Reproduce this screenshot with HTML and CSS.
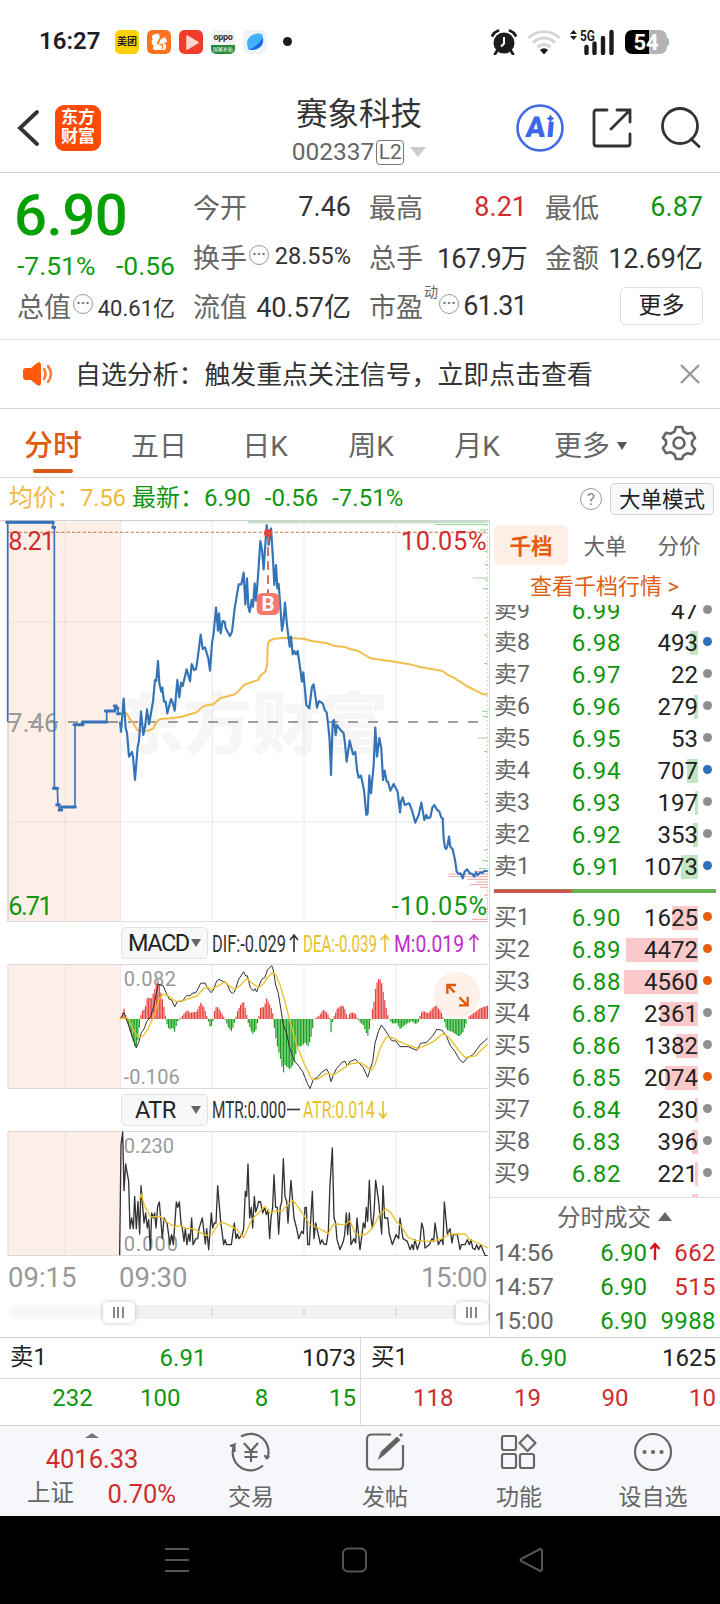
FILE: index.html
```html
<!DOCTYPE html>
<html lang="zh-CN">
<head>
  <meta charset="UTF-8">
  <meta name="viewport" content="width=device-width, initial-scale=1.0">
  <title>赛象科技 002337</title>
  <link rel="stylesheet" href="styles.css">
</head>
<body>
  <!-- Status bar -->
  <div class="status">
    <span class="clock">16:27</span>
    <div class="apps">
      <span class="app app-mt">美团</span>
      <svg class="app" viewBox="0 0 24 24"><rect width="24" height="24" rx="5" fill="#fa741f"/><path d="M8 4c4-2 6 2 4 5l-2 4c0 2 1 2 2 1 1-4 2-6 5-6l.5-1.500L19 9c1 1 1.500 3-.5 3.500L17 13c3 2 3 6 0 7H9c-3 0-4-2-2-4C4 14 4 11 6 9 4 7 5 5 8 4z" fill="#fff"/><path d="M12.500 15c3-2 4 1 2.500 4" fill="none" stroke="#fb7a1e" stroke-width="1.300"/></svg>
      <svg class="app" viewBox="0 0 24 24"><rect width="24" height="24" rx="5" fill="#f03c28"/><path d="M8 6l11 6.500L8 19z" fill="#fcd5cf" stroke="#fcd5cf" stroke-width="1.500" stroke-linejoin="round"/></svg>
      <span class="app app-oppo"><b>oppo</b><i>国家补贴</i></span>
      <svg class="app" viewBox="0 0 24 24"><rect width="24" height="24" rx="5" fill="#f1f4f7"/><path d="M19 4C13 2 4 6 4 13l1 6c8 3 17-2 15-11z" fill="#3fb0fa"/><path d="M20 8c1 7-5 13-15 12C12 18 17 13 20 8z" fill="#1b62e8"/></svg>
    </div>
    <span class="status-dot"></span>
    <div class="status-right">
      <svg class="alarm" width="26" height="26" viewBox="0 0 26 26"><circle cx="13" cy="14" r="10.500" fill="#1c1c1e"/><path d="M1.500 6.500A10 10 0 0 1 7 1.800M24.500 6.500A10 10 0 0 0 19 1.800M6 22l-2 3M20 22l2 3" stroke="#1c1c1e" stroke-width="2.800" fill="none" stroke-linecap="round"/><path d="M13 8v6.500l-3 3" stroke="#fff" stroke-width="2" fill="none"/></svg>
      <svg class="wifi" width="34" height="26" viewBox="0 0 34 26"><g fill="none" stroke="#d4d4d6" stroke-width="2.800"><path d="M1.500 9a22 22 0 0 1 31 0"/><path d="M6 13.800a15.500 15.500 0 0 1 22 0"/><path d="M10.500 18.500a9 9 0 0 1 13 0"/></g><path d="M17 25.500l-4-4.500a5.500 5.500 0 0 1 8 0z" fill="#1c1c1e"/></svg>
      <svg class="signal" width="46" height="26" viewBox="0 0 46 26"><path d="M0 5l3.500-4L7 5zM0 7l3.500 4L7 7z" fill="#1c1c1e"/><text x="10" y="11.500" textLength="15" lengthAdjust="spacingAndGlyphs">5G</text><path d="M16.500 18v6M24.500 14.500v9.500M33 9v15M41.500 3v21" stroke="#1c1c1e" stroke-width="4.400" stroke-linecap="round"/></svg>
      <span class="battery">54</span><i class="nub"></i>
    </div>
  </div>

  <!-- Header -->
  <div class="header">
    <svg class="back" width="22" height="38" viewBox="0 0 22 38"><path d="M20 3L3 19l17 16" fill="none" stroke="#333" stroke-width="3.800" stroke-linecap="round"/></svg>
    <span class="logo">东方<br>财富</span>
    <div class="title">
      <h1>赛象科技</h1>
      <div class="code">002337<span class="l2">L2</span><i class="tri"></i></div>
    </div>
    <div class="tools">
      <svg class="ai" width="48" height="48" viewBox="0 0 48 48"><circle cx="24" cy="24" r="22.500" fill="none" stroke="#4169e6" stroke-width="2.600"/><text x="9" y="33" transform="skewX(-5) translate(3 0)">Aı</text><path d="M34.500 10.500q.8 3 4 4-3.200 1-4 4-.8-3-4-4 3.200-1 4-4z" fill="#3d66ea"/></svg>
      <svg width="42" height="42" viewBox="0 0 42 42"><g fill="none" stroke="#333" stroke-width="2.800" stroke-linecap="round"><path d="M16 3H5.500Q3 3 3 5.500v31Q3 39 5.500 39h31Q39 39 39 36.500V27"/><path d="M26 3h13v12M38 4L20 22"/></g></svg>
      <svg width="42" height="42" viewBox="0 0 42 42"><g fill="none" stroke="#333" stroke-width="2.800"><circle cx="20" cy="19" r="17.500"/><path d="M31 32l8 7.500" stroke-linecap="round"/></g></svg>
    </div>
  </div>

  <!-- Quote -->
  <div class="quote">
    <div class="price-box">
      <div class="price">6.90</div>
      <div class="change"><span>-7.51%</span><span>-0.56</span></div>
      <div class="item"><label>总值</label><i class="more-dot">···</i><b class="sm">40.61亿</b></div>
    </div>
    <div class="stats">
      <div class="item"><label>今开</label><b>7.46</b></div>
      <div class="item"><label>最高</label><b class="red">8.21</b></div>
      <div class="item"><label>最低</label><b class="green">6.87</b></div>
      <div class="item"><label>换手</label><i class="more-dot">···</i><b class="sm2">28.55%</b></div>
      <div class="item"><label>总手</label><b class="tight">167.9万</b></div>
      <div class="item"><label>金额</label><b>12.69亿</b></div>
      <div class="item"><label>流值</label><b>40.57亿</b></div>
      <div class="item"><label>市盈</label><sup>动</sup><i class="more-dot">···</i><b class="tight">61.31</b></div>
      <div class="item"><button class="more-btn">更多</button></div>
    </div>
  </div>

  <!-- Notice -->
  <div class="notice">
    <svg width="32" height="26" viewBox="0 0 32 26"><path d="M4 7h5l6-5q4-2 4 2v18q0 4-4 2l-6-5H4q-3 0-3-3v-6q0-3 3-3z" fill="#fd5a0a"/><path d="M22 8q3 5 0 10M26 5q6 8 0 16" fill="none" stroke="#fd7a3a" stroke-width="2.500" stroke-linecap="round"/></svg>
    <p>自选分析：触发重点关注信号，立即点击查看</p>
    <svg width="22" height="22" viewBox="0 0 22 22"><path d="M2 2l18 18M20 2L2 20" stroke="#999" stroke-width="2.400"/></svg>
  </div>

  <!-- Period tabs -->
  <div class="tabs">
    <span class="tab active">分时</span>
    <span class="tab">五日</span>
    <span class="tab">日K</span>
    <span class="tab">周K</span>
    <span class="tab">月K</span>
    <span class="tab tab-more">更多<i></i></span>
    <svg width="36" height="36" viewBox="0 0 36 36"><g fill="none" stroke="#666" stroke-width="2.600" stroke-linejoin="round"><path d="M15 2h6l1.500 4.500 4 2.300 4.600-1 3 5.200-3.100 3.500v4l3.100 3.500-3 5.200-4.600-1-4 2.300L21 34h-6l-1.500-4.500-4-2.300-4.600 1-3-5.200L5 19.500v-4L1.900 13l3-5.200 4.600 1 4-2.300z"/><circle cx="18" cy="18" r="5.500"/></g></svg>
  </div>

  <div class="info">
    <span class="yellow avg">均价：<em>7.56</em></span>
    <span class="green">最新：<em>6.90</em><em>-0.56</em><em>-7.51%</em></span>
    <span class="help">?</span>
    <button class="mode">大单模式</button>
  </div>

  <div class="main">
    <div class="charts">
      <!-- Price -->
      <svg class="chart-price" viewBox="0 30 1467 1206">
        <rect x="24" y="36" width="337" height="1200" fill="#fdeee7"/>
        <text class="watermark" x="345" y="718" textLength="820">东方财富</text>
        <g class="grid"><path d="M196 36V1236M361 36V1236M637 36V1236M912 36V1236M1188 36V1236M24 336H1463M24 936H1463"/></g>
        <path d="M0 31.500H1467M24 36V1236H1463" fill="none" stroke="#d2d2d2" stroke-width="4"/>
        <path d="M744 36H1463" stroke="#c4dfc7" stroke-width="7"/>
        <path d="M1306 44h157M1440 60h23M1452 124h11M1454 164h9M1454 210h9M1448 236h15M1452 324h11M1452 376h11M1452 460h11M1446 604h17M1448 619h15M1452 724h11M1454 852h9M1454 876h9M1452 1020h11M1446 1052h17M1436 1076h27" stroke="#8fd095" stroke-width="3"/>
        <path d="M1418 204h45M1434 684h29" stroke="#c4e2c8" stroke-width="5"/>
        <path d="M1462 44V1076" stroke="#8fd095" stroke-width="4" stroke-dasharray="3 9"/>
        <path d="M1346 1092h117M1345 1100h118M1402 1108h61M1428 1116h35M1410 1124h53M1440 1132h23M1416 1228h47M1422 1084h41M1452 1156h11M1448 1196h15" stroke="#eca5a9" stroke-width="3"/>
        <path d="M1462 1084V1230" stroke="#eca5a9" stroke-width="4" stroke-dasharray="3 5"/>
        <path d="M1295 1236H1463" stroke="#d9a3a3" stroke-width="5"/>
        <path d="M24 636H1440" stroke="#808080" stroke-width="5" stroke-dasharray="30 30"/>
        <path d="M24 67H1463" stroke="#cf8f68" stroke-width="4" stroke-dasharray="10 6"/>
        <g class="axis-lg">
          <text x="25" y="119" fill="#d02c2c" textLength="140">8.21</text>
          <text x="25" y="666" fill="#999" textLength="150">7.46</text>
          <text x="25" y="1215" fill="#0e960e" textLength="133">6.71</text>
          <text x="1202" y="119" fill="#d02c2c" textLength="258">10.05%</text>
          <text x="1175" y="1215" fill="#0e960e" textLength="286">-10.05%</text>
        </g>
        <polyline class="line-avg" points="362,610 380,610 388,625 398,637 412,660 420,663 445,662 460,655 470,635 480,627 510,625 545,620 590,607 605,592 615,587 640,583 660,565 705,553 720,538 732,525 752,517 775,510 780,498 790,490 797,483 801,465 804,400 808,393 820,387 850,383 910,386 935,393 983,400 1000,407 1035,411 1050,417 1073,422 1095,435 1110,444 1130,448 1190,456 1235,464 1255,470 1328,483 1342,494 1360,502 1380,515 1400,528 1445,551 1463,554"/>
        <polyline class="line-price thin" points="23,635 23,37 160,37 158,52 163,55 163,835 172,835 174,885 180,900 188,891 225,891 225,643 248,643 248,636 320,636 320,603 345,603 346,588 352,595 356,612"/>
        <path class="line-price thick" d="M20 37H160M158 52h6M160 835h13M170 884h8M177 900h8M184 891H226M222 644H249M247 636H320M316 603H345M343 588h6M346 595h8M352 611h7"/>
        <polyline class="line-price" points="360,635 363,665 371,566 377,655 381,668 387,740 396,726 399,740 405,810 413,710 417,692 423,605 430,675 436,645 441,598 447,642 452,615 459,575 465,510 469,512 474,453 478,520 484,545 487,533 492,575 497,575 502,610 513,567 518,578 524,602 532,510 538,562 543,518 548,528 560,478 570,514 575,462 582,480 588,478 593,445 602,374 608,417 615,412 625,445 630,482 636,400 641,370 648,293 654,362 657,310 662,370 668,333 674,335 677,355 690,378 696,365 704,295 716,223 724,223 731,188 736,283 741,205 745,290 749,306 755,270 759,290 764,220 768,272 774,200 781,93 786,120 791,178 800,45 806,105 813,55 818,130 823,225 828,165 832,235 836,222 841,290 846,362 850,340 855,278 861,345 869,410 873,380 878,433 883,423 888,433 893,423 899,465 906,515 910,487 919,585 928,595 936,530 941,523 951,593 957,573 968,580 974,600 980,607 984,640 989,690 993,795 998,635 1002,630 1007,675 1011,645 1020,658 1031,670 1035,700 1040,755 1049,692 1059,733 1066,726 1071,780 1076,803 1083,797 1092,840 1099,915 1103,910 1108,797 1113,850 1121,765 1126,653 1131,740 1138,684 1144,715 1149,810 1154,782 1160,815 1164,815 1171,842 1181,822 1193,845 1200,907 1203,875 1208,862 1214,885 1228,880 1237,905 1246,938 1256,915 1264,878 1273,930 1279,915 1283,925 1291,922 1297,893 1303,885 1310,898 1318,905 1324,923 1328,925 1331,985 1335,1013 1339,1017 1343,1005 1347,980 1351,1010 1358,1018 1365,1050 1370,1085 1376,1092 1382,1090 1388,1105 1394,1085 1401,1078 1410,1090 1417,1092 1423,1100 1428,1087 1433,1095 1440,1088 1448,1088 1453,1083 1463,1083"/>
        <path d="M804 70V250" stroke="#de6a62" stroke-width="6" stroke-dasharray="26 16"/>
        <circle cx="804" cy="69" r="12" fill="#e0483c"/>
        <rect x="770" y="249" width="68" height="66" rx="16" fill="#f37a6b"/>
        <text class="buy-mark" x="804" y="304" text-anchor="middle">B</text>
      </svg>

      <div class="legend">
        <button class="picker">MACD<i></i></button>
        <svg width="275" height="32" viewBox="0 0 275 32">
          <text x="0" y="25" textLength="74" lengthAdjust="spacingAndGlyphs" fill="#333">DIF:-0.029</text>
          <path d="M82 25V8M78 13l4-5 4 5" stroke="#333"/>
          <text x="91" y="25" textLength="74" lengthAdjust="spacingAndGlyphs" fill="#e8c12a">DEA:-0.039</text>
          <path d="M173 25V8M169 13l4-5 4 5" stroke="#e8c12a"/>
          <text x="182" y="25" textLength="70" lengthAdjust="spacingAndGlyphs" fill="#c02cc8">M:0.019</text>
          <path d="M262 25V8M257.500 13l4.500-5 4.500 5" stroke="#c02cc8"/>
        </svg>
      </div>

      <!-- MACD -->
      <svg class="chart-sub" viewBox="0 132 1467 375">
        <rect x="24" y="134" width="337" height="372" fill="#fdeee7"/>
        <g class="grid"><path d="M196 134V506M361 134V506M637 134V506M912 134V506M1188 134V506"/></g>
        <path class="frame" d="M1463 133.500H24V505.500H1463"/>
        <g class="axis-sm"><text x="371" y="197" textLength="157">0.082</text><text x="371" y="493" textLength="168">-0.106</text></g>
        <g id="macdBars"></g>
        <polyline class="line-dark" points="360,297 372,278 382,305 395,345 409,384 418,362 423,340 433,325 440,305 452,290 462,255 470,215 475,192 490,198 500,222 508,238 515,240 524,261 532,245 548,243 557,230 562,226 570,228 576,220 588,218 602,190 615,189 625,208 633,218 640,210 650,183 657,178 670,185 680,190 690,213 697,221 705,213 715,180 731,155 737,168 742,167 751,203 760,213 765,206 770,216 778,195 785,178 795,172 802,150 815,137 820,150 827,195 835,220 843,270 850,315 860,340 868,380 878,410 885,425 898,440 908,455 915,472 922,490 930,506 940,478 950,474 965,457 980,447 987,460 993,485 1002,460 1010,445 1025,428 1034,423 1042,438 1050,425 1066,418 1078,430 1090,443 1103,472 1110,450 1118,425 1125,370 1135,335 1144,315 1155,330 1165,345 1175,362 1188,363 1200,380 1225,380 1250,391 1262,370 1280,367 1300,345 1310,328 1325,330 1338,345 1350,375 1365,395 1378,418 1390,428 1400,415 1420,403 1440,375 1463,355"/>
        <polyline class="line-gold" points="360,297 380,292 390,305 400,330 415,352 430,347 445,325 465,280 478,235 490,223 505,227 527,245 550,242 590,228 610,207 620,201 635,208 655,197 675,185 690,200 705,208 720,197 740,175 755,188 775,203 790,192 805,170 818,157 828,165 840,195 855,245 870,305 890,375 910,425 935,477 950,479 980,460 1000,465 1020,452 1050,432 1080,427 1095,437 1115,450 1125,435 1140,385 1158,352 1175,352 1210,370 1255,386 1300,365 1330,340 1350,355 1375,390 1395,412 1425,408 1463,373"/>
        <circle cx="1371" cy="225" r="69" fill="#fdf0e8" fill-opacity=".95"/>
        <path d="M1342 221V195H1368M1343 196L1364 217M1378 232L1402 256M1403 231V256H1377" fill="none" stroke="#e0590c" stroke-width="7"/>
      </svg>

      <div class="legend">
        <button class="picker atr-picker">ATR<i></i></button>
        <svg width="275" height="32" viewBox="0 0 275 32">
          <text x="0" y="24" textLength="74" lengthAdjust="spacingAndGlyphs" fill="#333">MTR:0.000</text>
          <path d="M75 15.500h13" stroke="#333"/>
          <text x="91" y="24" textLength="72" lengthAdjust="spacingAndGlyphs" fill="#e8c12a">ATR:0.014</text>
          <path d="M171 7v17M167 19l4 5 4-5" stroke="#e8c12a"/>
        </svg>
      </div>

      <!-- ATR -->
      <svg class="chart-sub" viewBox="0 139 1467 375">
        <rect x="24" y="141" width="337" height="372" fill="#fdeee7"/>
        <g class="grid"><path d="M196 141V513M637 141V513M912 141V513M1188 141V513"/></g>
        <path class="frame" d="M1463 140.500H24V512.500H1463"/>
        <g class="axis-sm"><text x="371" y="204" textLength="151">0.230</text><text x="371" y="499" textLength="163">0.000</text></g>
        <polyline class="line-dark atr" points="359,512 363,180 368,142 372,318 377,238 386,290 390,432 395,400 400,432 404,335 409,432 414,350 419,448 423,303 432,415 437,385 442,430 446,405 451,495 455,385 460,400 464,385 468,430 473,365 478,352 487,462 492,400 501,415 510,480 515,450 520,480 529,352 533,368 538,352 543,415 547,432 552,470 556,432 561,480 566,448 570,470 575,400 579,480 588,462 593,462 597,432 607,400 616,478 620,432 626,495 634,385 638,430 643,415 648,415 653,303 662,410 671,480 675,465 680,480 694,480 703,415 708,462 712,448 717,462 726,450 731,432 736,320 740,335 744,238 749,400 754,368 758,430 763,335 767,382 772,368 776,350 782,352 788,385 794,368 799,390 804,375 809,462 813,400 818,368 822,270 827,368 832,368 836,448 841,365 845,352 850,222 855,335 860,350 864,415 868,355 873,287 882,400 890,432 896,462 905,440 910,447 915,368 919,368 923,480 928,480 937,320 942,462 947,415 955,450 961,478 966,465 972,478 979,480 985,440 990,300 997,190 1002,400 1007,415 1011,465 1020,495 1030,470 1034,450 1039,385 1043,450 1048,385 1053,480 1062,462 1067,475 1071,400 1080,495 1086,450 1090,415 1095,430 1099,368 1103,410 1108,287 1113,400 1117,430 1122,385 1127,287 1136,350 1145,448 1149,303 1154,400 1163,400 1168,448 1177,480 1188,450 1196,462 1200,400 1209,462 1222,470 1230,495 1236,480 1240,495 1245,465 1252,495 1260,470 1265,415 1270,432 1275,490 1288,480 1296,462 1301,470 1305,415 1315,480 1325,462 1329,480 1333,352 1342,448 1350,432 1356,475 1360,450 1372,450 1380,495 1384,480 1395,480 1402,465 1408,480 1413,465 1418,490 1425,495 1430,480 1436,495 1442,480 1455,512 1463,514"/>
        <polyline class="line-gold" points="418,345 424,328 432,360 452,397 480,395 500,412 525,427 540,422 560,432 580,432 615,452 635,450 655,418 668,413 690,423 712,435 730,460 740,440 755,405 775,385 795,365 810,385 830,378 845,380 865,358 880,347 900,375 920,405 930,420 955,430 985,447 1000,418 1035,420 1050,408 1065,445 1080,453 1100,448 1120,425 1140,388 1158,373 1172,383 1185,405 1200,420 1225,458 1245,467 1290,470 1325,463 1350,448 1395,448 1410,465 1435,475 1463,490"/>
      </svg>

      <div class="times"><span>09:15</span><span>09:30</span><span>15:00</span></div>
      <div class="slider">
        <span class="thumb"></span>
        <i></i><i></i><i></i>
        <span class="thumb"></span>
      </div>
    </div>

    <!-- Order book -->
    <div class="book">
      <div class="book-tabs"><span class="active">千档</span><span>大单</span><span>分价</span></div>
      <div class="book-link">查看千档行情 &gt;</div>
      <div class="rows sell" id="sellRows"></div>
      <div class="ratio"><i></i></div>
      <div class="rows buy" id="buyRows"></div>
      <div class="deals">
        <div class="deals-title">分时成交<i></i></div>
        <div class="deal"><span>14:56</span><b class="green">6.90</b><svg width="12" height="18" viewBox="0 0 12 18"><path d="M6 18V2M1.500 7L6 2l4.500 5" fill="none" stroke="#d4141c" stroke-width="2.400"/></svg><b class="red">662</b></div>
        <div class="deal"><span>14:57</span><b class="green">6.90</b><b class="red">515</b></div>
        <div class="deal"><span>15:00</span><b class="green">6.90</b><b class="green">9988</b></div>
      </div>
    </div>
  </div>

  <!-- Level one queue -->
  <div class="queue">
    <div class="side">
      <div class="best"><span>卖1</span><b class="green">6.91</b><span>1073</span></div>
      <div class="lots green"><span>232</span><span>100</span><span>8</span><span>15</span></div>
    </div>
    <div class="side">
      <div class="best"><span>买1</span><b class="green">6.90</b><span>1625</span></div>
      <div class="lots red"><span>118</span><span>19</span><span>90</span><span>10</span></div>
    </div>
  </div>

  <!-- Bottom bar -->
  <div class="bottom">
    <div class="index">
      <i></i>
      <div class="red index-value">4016.33</div>
      <div class="index-row"><span>上证</span><span class="red">0.70%</span></div>
    </div>
    <div class="act">
      <svg width="44" height="40" viewBox="0 0 44 40"><path d="M12 4.500A18 18 0 0 1 38 27l2-3.500M38 27l-2.500-4M34 33.500A18 18 0 0 1 5.500 12.500L1 14M5.500 12.500V20M15 11l7 8 7-8M22 19v11M15.500 20h13M15.500 25h13"/></svg>
      <span>交易</span>
    </div>
    <div class="act">
      <svg width="44" height="40" viewBox="0 0 44 40"><path d="M28 2.500H9Q4 2.500 4 7v26q0 4.500 5 4.500h26q5 0 5-4.500V13"/><path d="M17 25l2-5L34 6l2 2-15 14z" fill="#555"/><path d="M37 4l2-2" stroke-width="3"/></svg>
      <span>发帖</span>
    </div>
    <div class="act">
      <svg width="44" height="40" viewBox="0 0 44 40"><rect x="5" y="4" width="14" height="14" rx="2"/><rect x="5" y="22" width="14" height="14" rx="2"/><rect x="23" y="22" width="14" height="14" rx="2"/><path d="M30.500 3l8 8-8 8-8-8z" stroke-linejoin="round"/></svg>
      <span>功能</span>
    </div>
    <div class="act">
      <svg width="44" height="40" viewBox="0 0 44 40"><circle cx="22" cy="20" r="18"/><path d="M13.500 20h.1M22 20h.1M30.500 20h.1" stroke-width="4" stroke-linecap="round"/></svg>
      <span>设自选</span>
    </div>
  </div>

  <div class="sysnav">
    <svg width="26" height="26" viewBox="0 0 26 26"><path d="M1 2h24M1 13h24M1 24h24"/></svg>
    <svg width="26" height="26" viewBox="0 0 26 26"><rect x="2" y="1.500" width="23" height="23" rx="5"/></svg>
    <svg width="26" height="26" viewBox="0 0 26 26"><path d="M22 2L3 12q-1 1 0 2l19 10q2 0 2-2V4q0-2-2-2z"/></svg>
  </div>

  <script>
    // [price, volume, bar width, dot colour]
    const sells = [
      ['6.99', 47, 0, 'grey'], ['6.98', 493, 8, 'blue'], ['6.97', 22, 0, 'grey'],
      ['6.96', 279, 4, 'grey'], ['6.95', 53, 0, 'grey'], ['6.94', 707, 11, 'blue'],
      ['6.93', 197, 3, 'grey'], ['6.92', 353, 5, 'grey'], ['6.91', 1073, 17, 'blue']
    ];
    const buys = [
      ['6.90', 1625, 26, 'orange'], ['6.89', 4472, 72, 'orange'], ['6.88', 4560, 74, 'orange'],
      ['6.87', 2361, 38, 'grey'], ['6.86', 1382, 22, 'grey'], ['6.85', 2074, 33, 'orange'],
      ['6.84', 230, 3, 'grey'], ['6.83', 396, 6, 'grey'], ['6.82', 221, 3, 'grey']
    ];

    function row(name, r) {
      return `<div class="row"><span>${name}</span><b>${r[0]}</b>` +
        `<em><i style="width:${r[2]}px"></i><u>${r[1]}</u></em><s class="${r[3]}"></s></div>`;
    }
    document.getElementById('sellRows').innerHTML = sells.map((r, i) => row('卖' + (9 - i), r)).join('');
    document.getElementById('buyRows').innerHTML = buys.map((r, i) => row('买' + (i + 1), r)).join('') +
      '<div class="row"><span></span><b></b><em><i style="width:6px"></i></em><s></s></div>';

    // MACD histogram, one bar a minute, interpolated between turning points
    const zero = 297;
    const env = [[362,297],[365,285],[372,265],[378,290],[380,300],[385,315],[395,350],[405,380],[412,375],[418,325],[420,297],[425,275],[435,265],[442,232],[455,235],[465,205],[474,178],[482,215],[490,250],[497,290],[500,310],[508,330],[517,322],[524,335],[532,305],[540,297],[553,280],[562,270],[570,278],[590,275],[602,248],[612,262],[622,292],[628,315],[632,325],[640,300],[645,262],[655,262],[665,280],[675,297],[685,322],[695,335],[703,310],[712,275],[720,258],[730,243],[738,272],[745,310],[757,343],[768,330],[775,297],[782,262],[792,262],[800,235],[810,255],[818,275],[821,310],[830,370],[840,410],[850,460],[855,435],[870,448],[882,430],[892,380],[905,378],[915,368],[925,380],[935,345],[942,297],[955,290],[970,270],[982,278],[990,297],[993,338],[998,305],[1002,290],[1012,265],[1028,255],[1036,270],[1043,297],[1050,278],[1065,278],[1072,295],[1080,307],[1090,315],[1103,350],[1110,320],[1116,275],[1122,245],[1128,195],[1138,172],[1145,190],[1155,245],[1163,285],[1170,303],[1180,312],[1190,308],[1200,327],[1215,315],[1235,303],[1248,313],[1256,305],[1262,280],[1270,273],[1285,280],[1300,262],[1310,255],[1322,272],[1332,300],[1340,330],[1355,335],[1378,350],[1390,335],[1400,305],[1405,290],[1420,280],[1440,265],[1463,257]];
    let bars = '', k = 0;
    for (let x = 363; x < 1463; x += 4.6) {
      while (k < env.length - 2 && env[k + 1][0] < x) k++;
      const [x0, y0] = env[k], [x1, y1] = env[k + 1];
      const y = y0 + (y1 - y0) * (x - x0) / (x1 - x0);
      bars += `<path d="M${x.toFixed(1)} ${zero}V${y.toFixed(1)}" stroke="${y < zero ? '#e8423e' : '#18a01c'}"/>`;
    }
    document.getElementById('macdBars').innerHTML = bars;
  </script>
</body>
</html>
```
FILE: styles.css
```css
* { box-sizing: border-box; }
body {
  margin: 0;
  width: 720px;
  height: 1604px;
  overflow: hidden;
  background: #fff;
  color: #333;
  font-family: Roboto, "Noto Sans CJK SC", sans-serif;
  display: flex;
  flex-direction: column;
}
b, em, i, u, s { font-weight: 400; font-style: normal; text-decoration: none; }
button { font-family: inherit; color: #222; padding: 0; }
svg { display: block; flex: none; }
.red { color: #d02c2c; }
.green { color: #0e960e; }
.yellow { color: #f0b93f; }

/* status bar */
.status {
  height: 84px;
  display: flex;
  align-items: center;
  padding: 0 51px 0 39px;
}
.clock { width: 76px; font-size: 24px; font-weight: 600; color: #1c1c1e; padding-bottom: 2px; }
.apps { display: flex; gap: 8px; }
.app { width: 24px; height: 24px; border-radius: 5px; }
.app-mt { background: #ffd100; color: #222; font-size: 10px; font-weight: 700; line-height: 24px; text-align: center; }
.app-oppo { background: #f2f2f2; text-align: center; display: flex; flex-direction: column; }
.app-oppo b { font-size: 9px; line-height: 15px; height: 15px; font-weight: 700; letter-spacing: -.3px; }
.app-oppo i { background: #23893c; color: #fff; font-size: 5px; line-height: 9px; height: 9px; border-radius: 0 0 5px 5px; }
.status-dot { width: 9px; height: 9px; border-radius: 50%; background: #1c1c1e; margin-left: 16px; }
.status-right { margin-left: auto; display: flex; align-items: center; }
.wifi { margin-left: 10px; }
.signal { margin-left: 9px; }
.signal text { font-size: 15px; font-weight: 700; fill: #1c1c1e; }
.battery {
  width: 42px;
  height: 24px;
  margin-left: 9px;
  border-radius: 7px;
  background: linear-gradient(90deg, #000 57%, #b4b4b6 57%);
  color: #fff;
  font-size: 22px;
  font-weight: 700;
  line-height: 25px;
  text-align: center;
}
.nub { width: 2px; height: 8px; border-radius: 0 2px 2px 0; background: #b4b4b6; }

/* header */
.header {
  height: 89px;
  border-bottom: 1px solid #d4d4d4;
  display: flex;
  align-items: center;
  padding: 0 18px 0 17px;
}
.logo {
  width: 46px;
  height: 46px;
  margin-left: 16px;
  border-radius: 9px;
  background: #fd4a05;
  color: #fff;
  font-size: 17px;
  font-weight: 700;
  line-height: 19px;
  text-align: center;
  padding-top: 3px;
}
.title { width: 260px; margin-left: 128px; text-align: center; padding-top: 7px; }
.title h1 { margin: 0; font-size: 31.5px; font-weight: 400; line-height: 44px; }
.code { display: flex; justify-content: center; align-items: center; font-size: 24.5px; color: #666; line-height: 30px; height: 32px; padding-bottom: 2px; }
.l2 { width: 28px; height: 25px; border: 1.5px solid #777; border-radius: 4px; font-size: 21px; line-height: 23px; margin-left: 2px; }
.tri { border: 8px solid transparent; border-top: 10px solid #ccc; border-bottom: 0; margin-left: 6px; }
.tools { margin-left: auto; display: flex; align-items: center; gap: 27px; }
.ai text { font-size: 29px; font-weight: 900; fill: #3d66ea; letter-spacing: 1px; }

/* quote */
.quote {
  height: 167px;
  border-bottom: 1px solid #e6e6e6;
  padding: 9px 15px 0 17px;
  display: flex;
  gap: 18px;
}
.price-box { width: 158px; }
.price { height: 63px; line-height: 67px; font-size: 58px; font-weight: 500; color: #04a004; margin-left: -3px; letter-spacing: -.4px; }
.change { height: 36px; line-height: 41px; font-size: 26.5px; color: #0e9c0e; display: flex; justify-content: space-between; }
.stats { flex: 1; display: grid; grid-template-columns: repeat(3, 158px); grid-auto-rows: 49.5px; column-gap: 18px; }
.item { height: 49.5px; display: flex; align-items: center; white-space: nowrap; }
.item label { font-size: 27px; color: #666; }
.item b { margin-left: auto; font-size: 27px; }
.item .sm { font-size: 22px; }
.item .sm2 { font-size: 23.5px; }
.item .tight { letter-spacing: -.8px; }
.item sup { font-size: 14px; color: #666; align-self: flex-start; line-height: 22px; margin: 0 0 0 1px; }
.more-dot {
  width: 20px;
  height: 20px;
  border: 1.5px solid #999;
  border-radius: 50%;
  color: #777;
  font-size: 15px;
  font-weight: 700;
  line-height: 16px;
  text-align: center;
  margin: -3px 0 0 2px;
}
.item sup + .more-dot { margin-left: 1px; }
.more-btn { width: 83px; height: 38px; margin-left: auto; background: #fff; border: 1.5px solid #ddd; border-radius: 5px; font-size: 23px; line-height: 34px; }

.notice {
  height: 70px;
  border-bottom: 1px solid #d4d4d4;
  display: flex;
  align-items: center;
  padding: 0 19px 0 22px;
}
.notice p { flex: 1; margin: -2px 0 0 21px; font-size: 25.9px; white-space: nowrap; }

/* tabs */
.tabs { height: 69px; border-bottom: 1px solid #d4d4d4; display: flex; align-items: center; }
.tab { position: relative; width: 106px; height: 68px; line-height: 75px; font-size: 28px; color: #666; text-align: center; }
.tab.active { color: #dc5a12; font-size: 29px; font-weight: 500; }
.tab.active::after { content: ""; position: absolute; left: 33px; bottom: 4px; width: 40px; height: 4px; border-radius: 2px; background: #dc5a12; }
.tab-more { width: 131px; padding-right: 10px; }
.tab-more i { display: inline-block; border: 5px solid transparent; border-top: 8px solid #555; border-bottom: 0; margin: 0 0 6px 7px; }

.info { height: 42px; display: flex; align-items: center; padding: 0 6px 0 9px; font-size: 24px; line-height: 40px; white-space: nowrap; }
.info > span:not(.help) { padding-bottom: 3px; }
.avg { width: 123px; letter-spacing: -.3px; }
.info em { margin-right: 14px; }
.help { width: 22px; height: 22px; border: 1.5px solid #999; border-radius: 50%; color: #888; font-size: 17px; line-height: 20px; text-align: center; margin-left: auto; }
.mode { width: 104px; height: 32px; margin-left: 8px; background: #f7f8fa; border: 1px solid #d0d4d8; border-radius: 5px; font-size: 21.5px; line-height: 31px; }

/* charts */
.main { height: 817px; display: flex; }
.charts { width: 490px; border-right: 1.5px solid #d4d4d4; }
.chart-price { width: 489px; height: 402px; }
.chart-sub { width: 489px; height: 125px; }
.grid path { fill: none; stroke: #d4d4d4; stroke-width: 3; stroke-dasharray: 4 4; }
.frame { fill: none; stroke: #d8d8d8; stroke-width: 3; }
.watermark { font-family: "Noto Sans CJK SC", sans-serif; font-size: 205px; font-weight: 900; fill: #f6f6f6; }
.axis-lg { font-size: 76px; }
.axis-sm { font-size: 60px; fill: #999; }
.buy-mark { font-size: 62px; font-weight: 700; fill: #fff; }
.line-price { fill: none; stroke: #3573b9; stroke-width: 6.500; stroke-linejoin: round; }
.line-price.thin { stroke-width: 5; }
.line-price.thick { stroke-width: 9; stroke-linecap: round; }
.line-avg { fill: none; stroke: #f1bd4b; stroke-width: 6; stroke-linejoin: round; }
.line-dark { fill: none; stroke: #333; stroke-width: 3; stroke-linejoin: round; }
.line-dark.atr { stroke-width: 4; }
.line-gold { fill: none; stroke: #eac22c; stroke-width: 4; stroke-linejoin: round; }
#macdBars path { stroke-width: 3.600; }

.legend { height: 42px; display: flex; align-items: center; gap: 4px; padding-left: 121px; }
.legend text { font-size: 24px; }
.legend path { fill: none; stroke-width: 1.600; }
.picker { width: 87px; height: 32px; background: #f7f8fa; border: 1px solid #dde0e4; border-radius: 5px; font-size: 23.500px; letter-spacing: -1.500px; display: flex; align-items: center; justify-content: space-between; padding: 0 6px 0 6px; }
.picker i { border: 5px solid transparent; border-top: 8px solid #666; border-bottom: 0; }
.atr-picker { padding-left: 13px; letter-spacing: -.5px; }

.times { height: 42px; padding: 0 2px 0 8px; display: flex; font-size: 27.5px; line-height: 43px; color: #999; }
.times span:first-child { width: 111px; }
.times span:last-child { margin-left: auto; letter-spacing: -.5px; }
.slider { display: flex; align-items: center; height: 14px; margin: 7px 1px 0 9px; border-radius: 7px; background: linear-gradient(90deg, #f8f8fa 100px, #f1f1f4 110px); }
.slider .thumb {
  width: 32px;
  height: 21px;
  border-radius: 5px;
  box-shadow: 0 0 4px rgba(0,0,0,0.25);
  margin-left: 94px;
  background: linear-gradient(90deg, #888 2px, transparent 2px 4.500px, #888 4.500px 6.500px, transparent 6.500px 9px, #888 9px 11px, transparent 11px) 10px 5px / 12px 11px no-repeat #fff;
}
.slider i { width: 2px; height: 8px; background: #ddd; margin-left: 90px; }
.slider .thumb + i { margin-left: 76px; }
.slider i + .thumb { margin-left: auto; }

/* order book */
.book { width: 230px; padding: 0 4px; }
.book-tabs { display: flex; justify-content: space-between; padding-top: 5px; }
.book-tabs span { width: 74px; height: 40px; line-height: 43px; border-radius: 6px; text-align: center; font-size: 21.5px; color: #666; }
.book-tabs .active { background: #fdeee6; color: #e65c0c; font-weight: 700; }
.book-link { height: 40px; line-height: 43px; text-align: center; font-size: 22px; color: #dd5f17; padding-right: 1px; }
.rows { overflow: hidden; display: flex; flex-direction: column; font-size: 24px; line-height: 32px; }
.sell { height: 278px; justify-content: flex-end; }
.row { flex: none; height: 32px; display: flex; align-items: center; }
.row span { width: 56px; color: #666; font-size: 23px; }
.row b { width: 71px; text-align: right; color: #0e960e; letter-spacing: .6px; }
.row em { position: relative; width: 77px; height: 24px; line-height: 25px; text-align: right; color: #222; }
.row em i { position: absolute; right: 0; top: 0; height: 24px; background: #c0e5c2; }
.row em u { position: relative; }
.buy .row em i { background: #fbc9c9; }
.row s { width: 9px; height: 9px; border-radius: 50%; margin: -4px 0 0 5px; }
.grey { background: #8e8e94; }
.blue { background: #2f6fc2; }
.orange { background: #e65c05; }
.ratio { height: 4px; margin: 6px 0 9px; background: #68b250; }
.ratio i { display: block; width: 79px; height: 4px; background: #cf5353; clip-path: polygon(0 0, 100% 0, 76px 100%, 0 100%); }
.buy { height: 295px; }

.deals { margin: 0 -4px; padding: 0 4px; border-top: 1px solid #e0e0e0; font-size: 24px; }
.deals-title { height: 38px; line-height: 40px; padding-left: 63px; font-size: 23.500px; color: #666; }
.deals-title i { display: inline-block; border: 7px solid transparent; border-bottom: 9px solid #666; border-top: 0; margin: 0 0 5px 7px; }
.deal { height: 34px; display: flex; align-items: center; }
.deal span { width: 80px; color: #666; }
.deal b { width: 73px; text-align: right; }
.deal svg { margin: 0 0 4px 2px; }
.deal b:last-child { width: auto; margin-left: auto; letter-spacing: .4px; }

/* queue */
.queue { height: 89px; display: flex; border-top: 1px solid #d0d0d0; border-bottom: 1px solid #d0d0d0; font-size: 24px; }
.side { width: 360px; }
.side + .side { border-left: 1px solid #d8d8d8; }
.best { height: 41px; border-bottom: 1px solid #dcdcdc; display: flex; align-items: center; padding: 0 4px 0 10px; color: #222; }
.best span { width: 130px; font-size: 23.500px; line-height: 38px; }
.best b { width: 100px; text-align: center; }
.best span:first-child { padding-bottom: 2px; }
.best span:last-child { margin-left: auto; text-align: right; font-size: 24px; }
.lots { display: grid; grid-template-columns: repeat(4, 1fr); line-height: 39px; text-align: right; padding: 0 4px 0 5px; }

.bottom { height: 90px; display: flex; background: #f6f7fa; color: #666; }
.index { width: 184px; text-align: center; font-size: 25.500px; padding-top: 7px; }
.index i { display: block; width: 14px; margin: 0 auto; border: 7px solid transparent; border-bottom: 5px solid #777; border-top: 0; }
.index-value { line-height: 43px; height: 40px; }
.index-row { display: flex; justify-content: space-between; line-height: 30px; padding: 0 8px 0 27px; font-size: 23.500px; }
.index-row .red { line-height: 32px; font-size: 25.500px; }
.act { width: 134px; display: flex; flex-direction: column; align-items: center; padding-top: 6px; font-size: 23px; line-height: 34px; gap: 9px; }
.act svg { fill: none; stroke: #666; stroke-width: 2.200; }

.sysnav { height: 88px; background: #000; display: flex; gap: 151px; align-items: center; padding-left: 164px; }
.sysnav svg { fill: none; stroke: #555; stroke-width: 2; }
```
